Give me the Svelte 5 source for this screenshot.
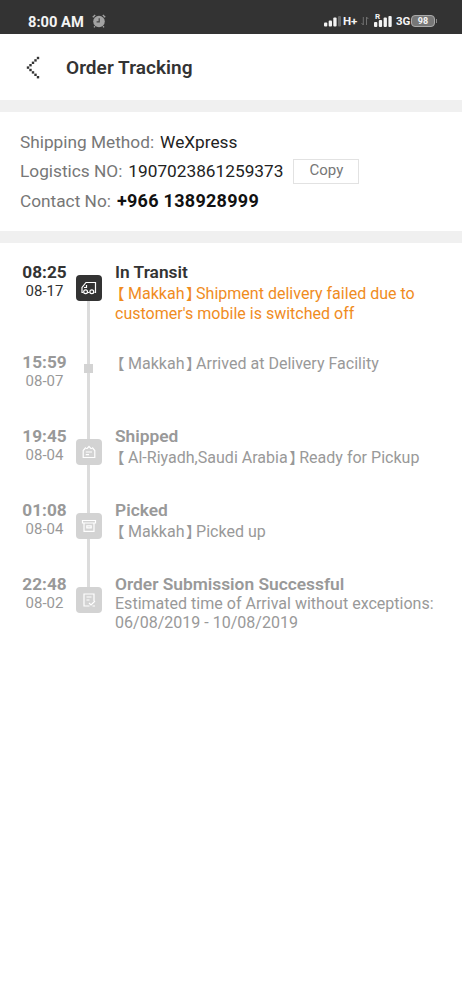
<script>
  const events = [
    { time: '08:25', date: '08-17', icon: 'truck', title: 'In Transit', place: 'Makkah', lines: ['Shipment delivery failed due to', "customer's mobile is switched off"], height: 90, active: true },
    { time: '15:59', date: '08-07', icon: 'dot', place: 'Makkah', lines: ['Arrived at Delivery Facility'], height: 74 },
    { time: '19:45', date: '08-04', icon: 'parcel', title: 'Shipped', place: 'Al-Riyadh,Saudi Arabia', lines: ['Ready for Pickup'], height: 74 },
    { time: '01:08', date: '08-04', icon: 'box', title: 'Picked', place: 'Makkah', lines: ['Picked up'], height: 74 },
    { time: '22:48', date: '08-02', icon: 'form', title: 'Order Submission Successful', lines: ['Estimated time of Arrival without exceptions:', '06/08/2019 - 10/08/2019'], height: 60, plain: true }
  ];
</script>

<div class="screen">
  <div class="status">
    <span class="clock">8:00 AM</span>
    <svg class="alarm" width="14" height="14" viewBox="0 0 14 14">
      <circle cx="7" cy="7.5" r="5.8" fill="#a2a2a2" />
      <path d="M.8 3.2 3.2.9M10.8.9l2.4 2.3M3 12.2 2 13.4M11 12.2l1 1.2" stroke="#a2a2a2" stroke-width="1.4" />
      <path d="M7.2 4.2v3.6H4.6" fill="none" stroke="#444" stroke-width="1.2" />
    </svg>
    <div class="signals">
      <svg width="18" height="12" viewBox="0 0 18 12">
        <g fill="#f4f4f4"><rect x="0" y="7.500" width="3.300" height="4" rx="1" /><rect x="4.700" y="5.500" width="3.300" height="6" rx="1" /><rect x="9.300" y="2.500" width="3.300" height="9" rx="1" /></g>
        <rect x="14" y="1" width="3" height="10.500" rx="1" fill="#666" />
      </svg>
      <b class="hp">H+</b>
      <svg class="arrows" width="8" height="10" viewBox="0 0 8 10"><path d="M2.3 1v8L.5 7M5.500 9V1l1.800 2" fill="none" stroke="#707070" stroke-width="1" /></svg>
      <div class="roam">
        <svg width="19" height="13" viewBox="0 0 19 13"><g fill="#f4f4f4"><rect x="0" y="7" width="3.300" height="5" rx="1" /><rect x="4.800" y="5" width="3.300" height="7" rx="1" /><rect x="9.600" y="2.500" width="3.300" height="9.500" rx="1" /><rect x="14.400" y="1" width="3.300" height="11" rx="1" /></g></svg>
        <b>R</b>
      </div>
      <b class="net">3G</b>
      <span class="battery">98</span><i class="cap"></i>
    </div>
  </div>

  <header>
    <svg width="14" height="24" viewBox="0 0 14 24" fill="#333">
      {#each [0, 1, 2, 3, 4, 5, 6, 7, 8] as n}
        <rect x={0.8 + Math.abs(n - 4) * 2.5} y={0.8 + n * 2.4} width="2.400" height="2.400" />
      {/each}
    </svg>
    <h1>Order Tracking</h1>
  </header>

  <section class="info">
    <div class="row"><span class="label">Shipping Method:</span><span class="value">WeXpress</span></div>
    <div class="row"><span class="label">Logistics NO:</span><span class="value">1907023861259373</span><button>Copy</button></div>
    <div class="row"><span class="label">Contact No:</span><strong>+966 138928999</strong></div>
  </section>

  <section class="timeline">
    {#each events as e, i}
      <article class:active={e.active} style="height: {e.height}px">
        <div class="when"><b>{e.time}</b><span>{e.date}</span></div>
        <div class="rail" class:last={i === events.length - 1} class:first={i === 0}>
          {#if e.icon === 'dot'}
            <i class="dot"></i>
          {:else}
            <div class="badge">
              <svg width="16" height="16" viewBox="0 0 16 16" fill="none" stroke="#fff" stroke-width="1.200">
                {#if e.icon === 'truck'}
                  <path d="M2.200 12.500H1V7.500L5 2.500H14.500V12.500H13.500M7 12.500H8.500M5.500 5v2.500H3" />
                  <circle cx="4.600" cy="11.800" r="1.900" /><circle cx="10.800" cy="11.800" r="1.900" />
                {:else if e.icon === 'parcel'}
                  <path d="M4.800 3.500 2.200 6.500V13.500H13.800V6.500L11.200 3.500M5 4.500H6.200L8 2.500 9.800 4.500H11M4.800 8H11M4.800 10.600H8" />
                {:else if e.icon === 'box'}
                  <path d="M1.500 2.500H14.500V5H1.500ZM3 5V13.300H13V5M5.800 7.800H10.200V9.800H5.800Z" />
                {:else}
                  <path d="M13 9V2H3V14H8.500M5.500 5H10.500M5.500 8H8.500M8 11l2 2 4-4M11.500 14H14" />
                {/if}
              </svg>
            </div>
          {/if}
        </div>
        <div class="detail" class:plain={e.plain}>
          {#if e.title}<h2>{e.title}</h2>{/if}
          {#each e.lines as line, n}
            <p>{#if n === 0 && e.place}<span class="br open">【</span>{e.place}<span class="br close">】</span>{/if}{line}</p>
          {/each}
        </div>
      </article>
    {/each}
  </section>
</div>

<style>
  :global(body) { margin: 0; background: #fff; }
  .screen { width: 462px; height: 1000px; overflow: hidden; background: #fff; font-family: Roboto, "Noto Sans CJK SC", sans-serif; color: #333; }
  .status { height: 34px; box-sizing: border-box; padding: 8px 25px 0 28px; display: flex; align-items: center; background: #333; color: #f4f4f4; }
  .clock { font-size: 14.700px; font-weight: 700; line-height: 20px; width: 64px; padding-top: 1px; white-space: nowrap; }
  .signals { display: flex; align-items: center; margin-left: auto; }
  .hp { font-size: 11.500px; width: 18px; margin-left: 1px; }
  .arrows { margin-right: 5px; }
  .roam { display: grid; width: 19px; }
  .roam svg, .roam b { grid-area: 1 / 1; }
  .roam b { font-size: 8px; line-height: 8px; margin: -2px 0 0 1px; }
  .net { font-size: 11.500px; margin-left: 3px; width: 15px; }
  .battery { box-sizing: border-box; width: 24px; height: 12px; border: 1px solid #aaa; border-radius: 4px; background: #777; font-size: 9px; font-weight: 700; line-height: 10px; text-align: center; }
  .cap { width: 1px; height: 4px; margin-left: 1px; background: #888; }
  header { height: 65px; display: flex; align-items: center; padding: 1px 0 0 26px; box-sizing: content-box; }
  h1 { font-size: 19px; letter-spacing: .05px; font-weight: 600; margin: 1px 0 0 26px; line-height: 24px; }
  .info { border: solid #f0f0f0; border-width: 12px 0; padding: 15px 20px 15.500px; }
  .row { height: 29.500px; display: flex; align-items: center; font-size: 17.250px; white-space: nowrap; }
  .label { color: #777; margin-right: 6px; }
  .value { color: #222; }
  strong { color: #111; font-size: 18px; letter-spacing: .28px; font-weight: 700; }
  button { box-sizing: border-box; width: 66px; height: 25px; margin-left: 10px; padding: 0 0 2px; background: #fff; border: 1px solid #e2e2e2; color: #777; font: 15px Roboto, sans-serif; }
  .timeline { padding: 19px 0 0 20px; }
  article { display: grid; grid-template-columns: 48px 41px 1fr; color: #999; }
  .when { display: flex; flex-direction: column; align-items: center; padding-left: 1px; }
  .when b { font-size: 17.200px; line-height: 21px; }
  .when span { font-size: 15px; line-height: 17px; }
  .rail { display: flex; justify-content: center; align-items: flex-start; background: linear-gradient(#dcdcdc, #dcdcdc) 50% 0 / 3px 100% no-repeat; }
  .rail.first { background-position: 50% 26px; }
  .rail.last { background-size: 3px 20px; }
  .badge { width: 26px; height: 26px; margin-top: 13px; border-radius: 4px; background: #d3d3d3; display: grid; place-items: center; }
  .dot { width: 9px; height: 9px; margin-top: 12px; background: #d3d3d3; }
  .detail { padding-left: 6px; white-space: nowrap; }
  h2 { margin: 0 0 1px; font-size: 17.350px; font-weight: 600; line-height: 21px; }
  p { margin: 0; font-size: 16.040px; line-height: 19px; }
  .active p + p { padding-top: 1px; }
  .detail p:first-child { padding-top: 2px; }
  .plain h2 { margin: 0; }
  .plain p { line-height: 18.500px; }
  .br { display: inline-block; height: 15px; line-height: 15px; vertical-align: -1px; font-size: 15px; font-family: "Noto Sans CJK SC", sans-serif; }
  .open { width: 13px; text-indent: -5.500px; }
  .close { width: 11.500px; text-indent: 1.500px; }
  .active { color: #333; }
  .active p { color: #f08c1e; }
  .active .badge { background: #333; }
</style>
